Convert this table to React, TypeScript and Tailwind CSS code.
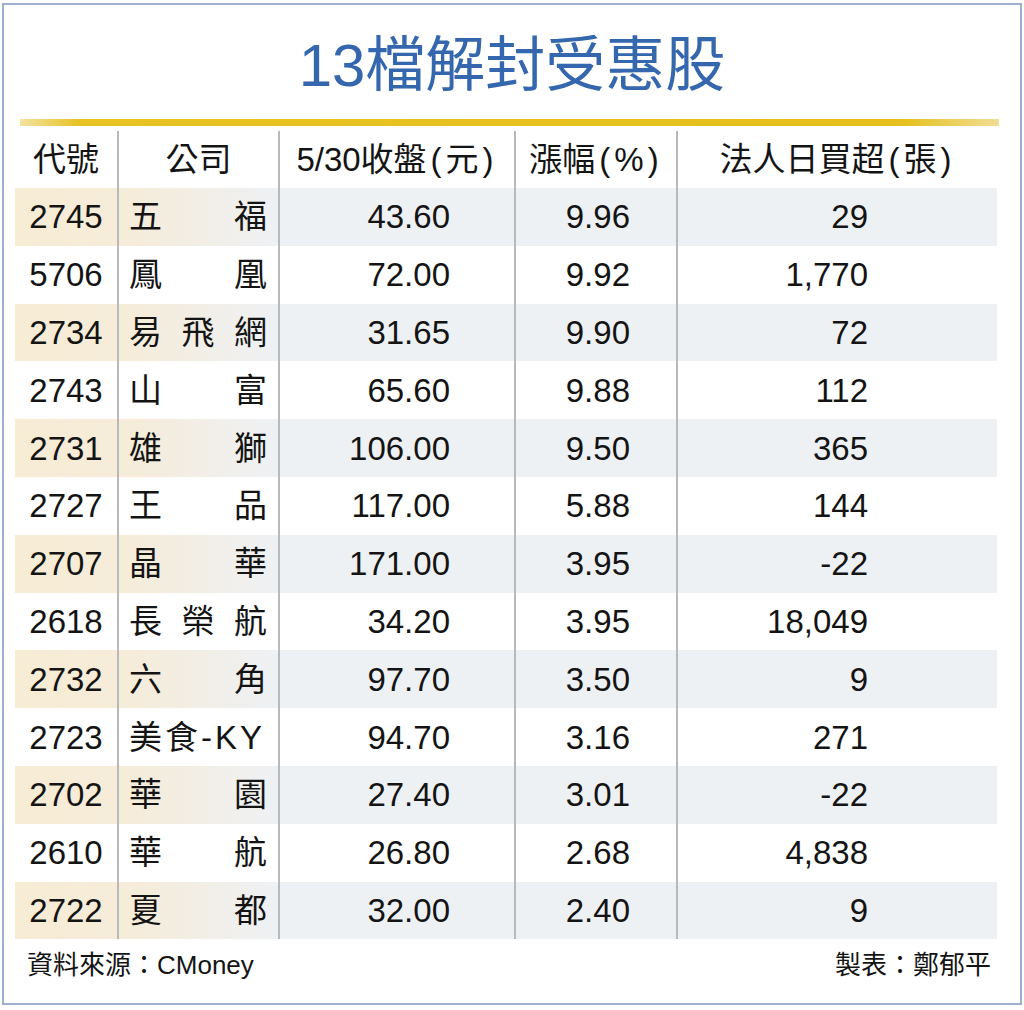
import React from "react";

type Row = {
  code: string;
  name: string[];
  close: string;
  pct: string;
  buy: string;
};

const rows: Row[] = [
  { code: "2745", name: ["五", "福"], close: "43.60", pct: "9.96", buy: "29" },
  { code: "5706", name: ["鳳", "凰"], close: "72.00", pct: "9.92", buy: "1,770" },
  { code: "2734", name: ["易", "飛", "網"], close: "31.65", pct: "9.90", buy: "72" },
  { code: "2743", name: ["山", "富"], close: "65.60", pct: "9.88", buy: "112" },
  { code: "2731", name: ["雄", "獅"], close: "106.00", pct: "9.50", buy: "365" },
  { code: "2727", name: ["王", "品"], close: "117.00", pct: "5.88", buy: "144" },
  { code: "2707", name: ["晶", "華"], close: "171.00", pct: "3.95", buy: "-22" },
  { code: "2618", name: ["長", "榮", "航"], close: "34.20", pct: "3.95", buy: "18,049" },
  { code: "2732", name: ["六", "角"], close: "97.70", pct: "3.50", buy: "9" },
  { code: "2723", name: ["美食-KY"], close: "94.70", pct: "3.16", buy: "271" },
  { code: "2702", name: ["華", "園"], close: "27.40", pct: "3.01", buy: "-22" },
  { code: "2610", name: ["華", "航"], close: "26.80", pct: "2.68", buy: "4,838" },
  { code: "2722", name: ["夏", "都"], close: "32.00", pct: "2.40", buy: "9" },
];

const cols = "grid grid-cols-[102px_161px_236px_162px_321px]";
const divider = "border-l-2 border-[#b9b9b9]";

// half-width paren with some air around it, like the print table
const P = ({ c }: { c: string }) => <span className="mx-[4px]">{c}</span>;

const App = () => {
  return (
    <div
      className="w-[1024px] h-[1010px] bg-white px-[2px] pt-[3px] pb-[5px] text-[#141414]"
      style={{ fontFamily: '"Liberation Sans", "Noto Sans CJK TC", sans-serif' }}
    >
      <div className="h-full border-2 border-[#9db0cf] flex flex-col">
        <h1 className="pt-[31px] text-center text-[60px] leading-none text-[#3467ad] font-normal">
          13檔解封受惠股
        </h1>
        <div className="mt-[23px] ml-[16px] mr-[21px] h-[7px] bg-[linear-gradient(to_right,#f4e2a0_0%,#e7c325_6%,#e5c01c_90%,#f1dd95_100%)]" />

        <div className="ml-[11px] w-[982px]">
          {/* header */}
          <div className={`${cols} mt-[5px] h-[57px] text-[33px] font-normal`}>
            <div className="flex items-center justify-center">代號</div>
            <div className={`${divider} flex items-center justify-center`}>公司</div>
            <div className={`${divider} flex items-center justify-center`}>
              5/30收盤<P c="(" />元<P c=")" />
            </div>
            <div className={`${divider} flex items-center justify-center`}>
              漲幅<P c="(" />%<P c=")" />
            </div>
            <div className={`${divider} flex items-center justify-center`}>
              法人日買超<P c="(" />張<P c=")" />
            </div>
          </div>

          {/* body */}
          {rows.map((r, i) => (
            <div
              key={r.code + i}
              className={`${cols} h-[57.8px] text-[33px] leading-none ${
                i % 2 === 0
                  ? "bg-[linear-gradient(to_right,#f7ecd4_0px,#f5ecda_120px,#eef1f4_260px)]"
                  : "bg-white"
              }`}
            >
              <div className="flex items-center justify-center">{r.code}</div>
              <div className={`${divider} flex items-center px-[10px] ${r.name.length > 1 ? "justify-between pr-[11px]" : "tracking-[3px]"}`}>
                {r.name.map((ch, k) => (
                  <span key={k}>{ch}</span>
                ))}
              </div>
              <div className={`${divider} flex items-center justify-end pr-[64px]`}>{r.close}</div>
              <div className={`${divider} flex items-center justify-end pr-[46px]`}>{r.pct}</div>
              <div className={`${divider} flex items-center justify-end pr-[129px]`}>{r.buy}</div>
            </div>
          ))}
        </div>

        {/* footer */}
        <div className="flex items-center justify-between pl-[23px] pr-[29px] h-[52px] text-[26px]">
          <span>資料來源：CMoney</span>
          <span>製表：鄭郁平</span>
        </div>
      </div>
    </div>
  );
};

export default App;
